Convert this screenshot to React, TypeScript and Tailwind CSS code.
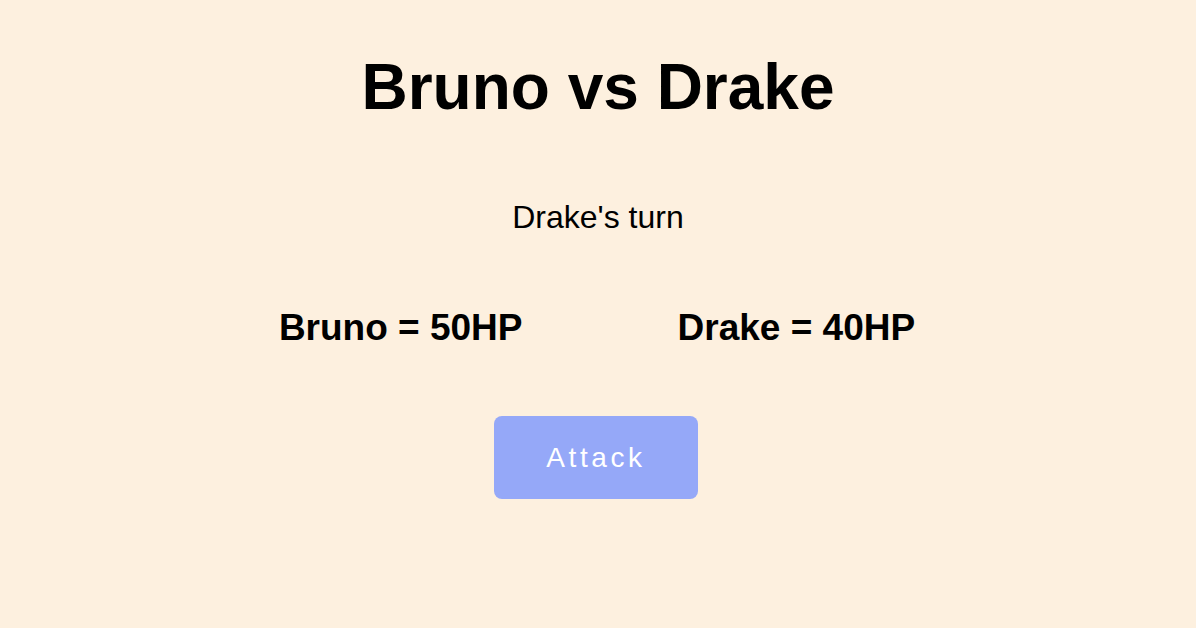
export default function App() {
	return (
		<div
			className="min-h-screen w-full bg-[#fdf0df] text-black flex flex-col items-center"
			style={{ fontFamily: '"Liberation Sans", Arial, Helvetica, sans-serif' }}
		>
			{/* Title */}
			<h1 className="mt-[50px] text-[64px] leading-[74px] font-bold">Bruno vs Drake</h1>

			{/* Turn indicator */}
			<p className="mt-[75px] text-[32px] leading-[37px] font-normal">Drake's turn</p>

			{/* Health */}
			<div className="mt-[71px] flex justify-center gap-[155px] mr-[2px]">
				<span className="text-[37px] leading-[42px] font-bold">Bruno = 50HP</span>
				<span className="text-[37px] leading-[42px] font-bold">Drake = 40HP</span>
			</div>

			<button className="mt-[67px] mr-[4px] w-[204px] h-[83px] rounded-[8px] bg-[#95a8f8] text-white text-[28px] tracking-[3.6px]">
				Attack
			</button>
		</div>
	);
}
